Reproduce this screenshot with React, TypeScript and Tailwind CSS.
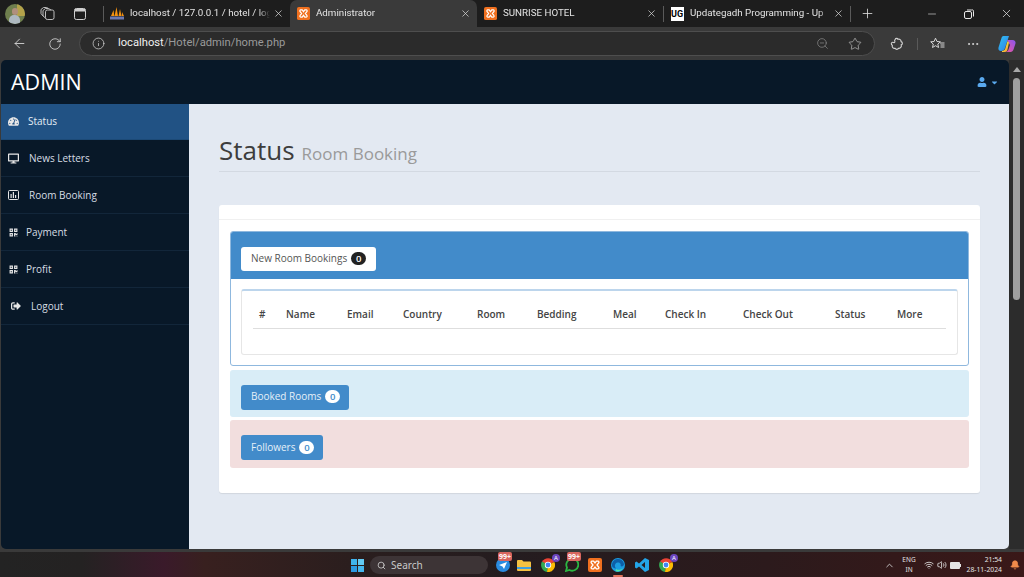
import React from "react";
import { ArrowLeft, RotateCw, Info, ZoomOut, Star, MoreHorizontal, X, Plus, Minus, Search, ChevronUp, Wifi, Volume2, Bell } from "lucide-react";
import { FaTachometerAlt, FaDesktop, FaQrcode, FaSignOutAlt, FaUser, FaCaretDown } from "react-icons/fa";

const Xampp = ({ s = 13 }: { s?: number }) => (
  <svg width={s} height={s} viewBox="0 0 14 14" className="shrink-0">
    <rect width="14" height="14" rx="2" fill="#f0701f" />
    <path d="M4 3.200h1.600L7 5l1.400-1.800H10c1 0 1.200 1.200.6 1.800L9 7l1.600 2c.6.7.4 1.800-.6 1.800H8.400L7 9l-1.400 1.800H4c-1 0-1.200-1.100-.6-1.800L5 7 3.400 5c-.6-.6-.4-1.800.6-1.800z" fill="none" stroke="#fff" strokeWidth="1.300" />
  </svg>
);

const Chrome = () => (
  <div className="relative w-[14px] h-[14px]">
    <svg width="14" height="14" viewBox="0 0 14 14">
      <path d="M7 7 1 4A7 7 0 0 1 13.300 4z" fill="#e94235" />
      <path d="M7 7 1 3.600A7 7 0 0 0 6 14z" fill="#34a853" />
      <path d="M7 7 13.300 4A7 7 0 0 1 6 14z" fill="#fbbc04" />
      <circle cx="7" cy="7" r="3.200" fill="#fff" />
      <circle cx="7" cy="7" r="2.400" fill="#4285f4" />
    </svg>
    <span className="absolute -top-[4px] -right-[5px] w-[8px] h-[8px] rounded-full bg-[#6b46c1] text-white text-[6px] leading-[8px] text-center">A</span>
  </div>
);

const Tab = ({ icon, title, active, w }: { icon: React.ReactNode; title: string; active?: boolean; w: string }) => (
  <div className={`flex items-center h-full px-[6px] ${w} ${active ? "bg-[#3a3a3a] rounded-t-[7px]" : ""}`}>
    <div className="w-[14px] h-[14px] flex items-center justify-center shrink-0">{icon}</div>
    <span className="ml-[6px] flex-1 min-w-0 overflow-hidden whitespace-nowrap text-[9.750px] text-[#e4e4e4] [mask-image:linear-gradient(to_right,black_92%,transparent)]">{title}</span>
    <X size={11} strokeWidth={1.600} className="text-[#d8d8d8] shrink-0 ml-[3px]" />
  </div>
);

const Sep = ({ h = "h-[16px]" }: { h?: string }) => <div className={`w-px ${h} bg-[#5a5a5a] shrink-0`} />;

const BoxChart = () => (
  <svg width="11" height="10" viewBox="0 0 11 10">
    <rect x=".5" y=".5" width="10" height="9" rx="1" fill="none" stroke="currentColor" />
    <path d="M2.500 4h1.200v4H2.500zM4.800 2h1.200v6H4.800zM7 5h1.200v3H7z" fill="currentColor" />
  </svg>
);

const navItems = [
  { label: "Status", icon: <FaTachometerAlt size={11} />, ml: "ml-[9px]", active: true, h: "h-[36px]" },
  { label: "News Letters", icon: <FaDesktop size={11} />, ml: "ml-[10px]" },
  { label: "Room Booking", icon: <BoxChart />, ml: "ml-[10px]" },
  { label: "Payment", icon: <FaQrcode size={9} />, ml: "ml-[7px]" },
  { label: "Profit", icon: <FaQrcode size={9} />, ml: "ml-[7px]" },
  { label: "Logout", icon: <FaSignOutAlt size={10} />, ml: "ml-[10px]", pad: "pl-[9px]" },
];

const cols = ["#", "Name", "Email", "Country", "Room", "Bedding", "Meal", "Check In", "Check Out", "Status", "More"];

const Badge = ({ dark }: { dark?: boolean }) => (
  <span className={`ml-[4px] w-[15px] h-[13px] rounded-full text-[9.500px] font-semibold leading-[13px] text-center ${dark ? "bg-[#222] text-white" : "bg-white text-[#428bca]"}`}>0</span>
);

export default function App() {
  return (
    <div className="w-[1024px] h-[577px] overflow-hidden flex flex-col bg-[#3a3a3a] font-['Open_Sans',sans-serif]">
      {/* tab strip */}
      <div className="h-[27px] flex items-center bg-[#1d1d1d] shrink-0 font-['Roboto',sans-serif]">
        <div className="w-[104px] flex items-center shrink-0">
          <div className="ml-[5px] w-[20px] h-[20px] rounded-full overflow-hidden relative bg-[#6f7f4e]">
            <div className="absolute right-0 top-0 w-[8px] h-[12px] bg-[#b3a24a]" />
            <div className="absolute left-[7px] top-[4px] w-[6px] h-[7px] rounded-full bg-[#b08f7c]" />
            <div className="absolute left-[4px] top-[11px] w-[11px] h-[9px] rounded-t-[5px] bg-[#aeb8c0]" />
          </div>
          <svg width="15" height="15" viewBox="0 0 15 15" fill="none" stroke="#bdbdbd" strokeWidth="1" className="ml-[15px]">
            <rect x="5.500" y="4" width="8.500" height="9.500" rx="1.800" />
            <path d="M5.500 12 3 10V4.500L5.500 2.500h3l2.500 1.500M3 10 1 7.500V3.500L3.500 1.500h3l2 1" />
          </svg>
          <svg width="12" height="12" viewBox="0 0 12 12" fill="none" stroke="#cfcfcf" strokeWidth="1" className="ml-[19px]">
            <rect x=".5" y=".5" width="11" height="11" rx="1.800" />
            <rect x="1" y="1" width="10" height="2.500" fill="#cfcfcf" stroke="none" />
          </svg>
          <div className="ml-auto"><Sep /></div>
        </div>
        <Tab
          w="w-[186px]"
          title="localhost / 127.0.0.1 / hotel / log"
          icon={
            <svg width="14" height="13" viewBox="0 0 14 13">
              <path d="M1 9 3.500 3 4.300 9zM4.500 9 6.500 0 8 9zM8.500 9 10 2 11.500 9zM11.800 9 12 5l2 4z" fill="#f29111" />
              <rect x="0" y="9.500" width="14" height="3" fill="#6c78af" />
            </svg>
          }
        />
        <Tab w="w-[187px]" active title="Administrator" icon={<Xampp />} />
        <Tab w="w-[186px]" title="SUNRISE HOTEL" icon={<Xampp />} />
        <Sep />
        <Tab
          w="w-[186px]"
          title="Updategadh Programming - Up"
          icon={<div className="w-[13px] h-[14px] bg-white text-black text-[9px] leading-[14px] font-bold text-center overflow-hidden">UG</div>}
        />
        <Sep />
        <Plus size={15} strokeWidth={1.300} className="text-[#e0e0e0] ml-[9px]" />
        <Minus size={12} strokeWidth={1.200} className="text-[#e8e8e8] ml-[51px]" />
        <svg width="10" height="10" viewBox="0 0 10 10" fill="none" stroke="#e8e8e8" strokeWidth="1" className="ml-[26px]">
          <rect x=".5" y="2.500" width="7" height="7" rx="1.500" />
          <path d="M3 1h4.500A1.500 1.500 0 0 1 9.500 3v4.500" />
        </svg>
        <X size={13} strokeWidth={1.300} className="text-[#f0f0f0] ml-[26px]" />
      </div>

      {/* toolbar */}
      <div className="h-[33px] flex items-center bg-[#3a3a3a] shrink-0 font-['Roboto',sans-serif]">
        <ArrowLeft size={15} strokeWidth={1.400} className="text-[#d8d8d8] ml-[12px]" />
        <RotateCw size={14} strokeWidth={1.400} className="text-[#d8d8d8] ml-[21px]" />
        <div className="ml-[17px] w-[796px] h-[25px] rounded-full bg-[#2b2b2b] border border-[#4e4e4e] flex items-center">
          <Info size={13} strokeWidth={1.300} className="text-[#dcdcdc] ml-[12px]" />
          <span className="ml-[13px] text-[11.200px] text-[#f0f0f0]">
            localhost<span className="text-[#9a9a9a]">/Hotel/admin/home.php</span>
          </span>
          <ZoomOut size={13} strokeWidth={1.300} className="text-[#8c8c8c] ml-auto" />
          <Star size={14} strokeWidth={1.200} className="text-[#bdbdbd] ml-[19px] mr-[12px]" />
        </div>
        <svg width="14" height="14" viewBox="0 0 14 14" fill="none" stroke="#d0d0d0" strokeWidth="1.100" className="ml-[15px]">
          <path d="M5.200 2.300C5.500 1 7.700 1 8 2.300c1.600-.5 3.200.6 3.100 2.300 1.700.4 1.700 2.900.1 3.300.7 1.900-.9 3.800-2.700 3.400-.6 1.400-2.800 1.400-3.400 0-1.900.4-3.300-1.200-2.800-3 -1.300-.7-1.300-2.300-.2-2.900.6-.3 1.100 0 1.700.2.800.2 1.400-.6 1-1.300-.4-.7-.1-1.500.4-2z" />
        </svg>
        <div className="ml-[13px]"><Sep h="h-[12px]" /></div>
        <svg width="15" height="14" viewBox="0 0 15 14" fill="none" stroke="#d8d8d8" strokeWidth="1" className="ml-[12px]">
          <path d="M5.500 1.200 7 4.500l3.400.3-2.600 2.300.8 3.400-3.100-1.800-3 1.800.8-3.400L.7 4.800 4.100 4.500z" />
          <path d="M10.500 8h4M10.500 10h4M10 6h4.500" />
        </svg>
        <MoreHorizontal size={14} strokeWidth={1.500} className="text-[#e0e0e0] ml-[21px]" />
        <svg width="18" height="18" viewBox="0 0 18 18" className="ml-[18px]">
          <defs>
            <linearGradient id="cp1" x1="0" y1="0" x2="1" y2="1"><stop offset="0" stopColor="#2fc4f2" /><stop offset="1" stopColor="#2f7ae8" /></linearGradient>
            <linearGradient id="cp2" x1="0" y1="1" x2="1" y2="0"><stop offset="0" stopColor="#f0569a" /><stop offset="1" stopColor="#8a55f0" /></linearGradient>
            <linearGradient id="cp3" x1="0" y1="0" x2="1" y2="1"><stop offset="0" stopColor="#46d08a" /><stop offset=".5" stopColor="#f5d33a" /><stop offset="1" stopColor="#f57a3a" /></linearGradient>
          </defs>
          <path d="M5.500 1H11L7 13c-.5 2-2 3-4 3-2 0-3-1.500-2.500-3.500L3.500 3c.3-1.300 1-2 2-2z" fill="url(#cp1)" />
          <path d="M9 5h5.500c2 0 3.500 1.500 3 3.500l-2 6c-.5 1.500-1.500 2.500-3 2.500H7c2 0 3-1 3.500-2.500L12 10z" fill="url(#cp2)" />
          <path d="M4 16c2 0 2.800-1 3.300-2.500L9.500 6 11 7.500 9.500 14.500c-.3 1.500-1 2.500-2.500 2.500H4z" fill="url(#cp3)" />
        </svg>
      </div>

      {/* page + scrollbar */}
      <div className="h-[489px] flex shrink-0">
        <div className="w-[1008px] ml-px flex flex-col rounded-t-[5px] rounded-b-[5px] overflow-hidden">
          <div className="h-[44px] flex items-center justify-between bg-[#081828] shrink-0">
            <span className="ml-[10px] text-[21.500px] font-medium text-white">ADMIN</span>
            <div className="flex items-center gap-[3px] mr-[10px] text-[#5aa9ee]">
              <FaUser size={10} />
              <FaCaretDown size={9} />
            </div>
          </div>
          <div className="flex flex-1 min-h-0">
            <nav className="w-[188px] bg-[#081828] shrink-0">
              {navItems.map((n) => (
                <div
                  key={n.label}
                  className={`${n.h ?? "h-[37px]"} flex items-center border-b ${n.pad ?? "pl-[7px]"} text-[10px] ${
                    n.active ? "bg-[#215284] border-[#1c4a77] text-[#e4edf5]" : "border-[#12263a] text-[#d6dde4]"
                  }`}
                >
                  <span className="w-[11px] flex justify-center shrink-0 text-[#e6e6e6]">{n.icon}</span>
                  <span className={n.ml}>{n.label}</span>
                </div>
              ))}
            </nav>
            <main className="flex-1 bg-[#e3e9f2] pl-[30px] pr-[29px] pt-[27px]">
              <div className="h-[41px] border-b border-[#d3d9e2] flex items-baseline">
                <span className="text-[26px] leading-[38px] text-[#3d3d3d]">Status</span>
                <span className="ml-[7px] text-[17px] text-[#9a9a9a]">Room Booking</span>
              </div>
              <div className="mt-[33px] h-[288px] bg-white rounded-[3px] shadow-[0_1px_1px_rgba(0,0,0,0.08)]">
                <div className="h-[15px] border-b border-[#f0f0f0]" />
                <div className="px-[11px] pt-[11px] flex flex-col">
                  <div className="h-[135px] border border-[#8fb8de] rounded-[3px] flex flex-col overflow-hidden">
                    <div className="h-[47px] bg-[#428bca] px-[10px] flex items-center shrink-0">
                      <div className="mt-[7px] h-[24px] w-[135px] bg-white rounded-[3px] flex items-center pl-[10px] pb-[2px] text-[10px] text-[#555]">
                        New Room Bookings
                        <Badge dark />
                      </div>
                    </div>
                    <div className="px-[10px] pt-[10px]">
                      <div className="h-[66px] border border-[#e6e6e6] border-t-2 border-t-[#bcd5ec] rounded-[3px] px-[11px] pt-[14px]">
                        <div className="grid grid-cols-[27px_61px_56px_74px_60px_76px_52px_78px_92px_62px_55px] h-[24px] border-b border-[#dedede] text-[10px] font-semibold text-[#444] leading-[19px]">
                          {cols.map((c) => (
                            <div key={c} className="pl-[6px] whitespace-nowrap">{c}</div>
                          ))}
                        </div>
                      </div>
                    </div>
                  </div>
                  <div className="mt-[4px] h-[47px] bg-[#d9edf7] rounded-[3px] pl-[11px] flex items-center">
                    <div className="mt-[7px] h-[25px] w-[108px] bg-[#428bca] rounded-[3px] flex items-center pl-[10px] pb-[2px] text-[10px] text-[#e6f0f8]">
                      Booked Rooms
                      <Badge />
                    </div>
                  </div>
                  <div className="mt-[3px] h-[48px] bg-[#f2dede] rounded-[3px] pl-[11px] flex items-center">
                    <div className="mt-[7px] h-[25px] w-[82px] bg-[#428bca] rounded-[3px] flex items-center pl-[10px] pb-px text-[10px] text-[#e6f0f8]">
                      Followers
                      <Badge />
                    </div>
                  </div>
                </div>
              </div>
            </main>
          </div>
        </div>
        <div className="flex-1 bg-[#2c2c2c] flex flex-col items-center pt-[7px]">
          <div className="w-0 h-0 border-l-[4px] border-r-[4px] border-b-[5px] border-transparent border-b-[#a8a8a8]" />
          <div className="mt-[6px] w-[7px] h-[222px] rounded-full bg-[#9f9f9f]" />
        </div>
      </div>

      {/* taskbar */}
      <div className="flex-1 flex items-center pt-px border-t-[3px] border-[#3a3a3a] bg-[linear-gradient(90deg,#232323_0%,#242222_8%,#3a1a2a_16%,#38201f_20%,#2a1e1e_35%,#241c1f_50%,#2c1a1c_75%,#3a1818_100%)] font-['Noto_Sans',sans-serif]">
        <div className="grid grid-cols-2 gap-px w-[13px] h-[13px] ml-[351px]">
          <div className="bg-[#3fb4ee]" /><div className="bg-[#62caf3]" /><div className="bg-[#2b9ae3]" /><div className="bg-[#45b7ee]" />
        </div>
        <div className="ml-[6px] w-[118px] h-[18px] rounded-full bg-[#3d3436] flex items-center">
          <Search size={9} strokeWidth={2} className="text-[#ddd] ml-[7px]" />
          <span className="ml-[5px] text-[10px] text-[#c8c8c8]">Search</span>
        </div>
        <div className="ml-[8px] w-[14px] h-[14px] rounded-full bg-[#2a8be0] relative">
          <svg width="14" height="14" viewBox="0 0 14 14"><path d="M3 7l8-3-3 7-1.500-2.500z" fill="#fff" /></svg>
          <span className="absolute -top-[6px] left-[2px] px-[1px] bg-[#d9665f] rounded-[2px] text-[7px] leading-[9px] text-white font-bold whitespace-nowrap">99+</span>
        </div>
        <svg width="14" height="13" viewBox="0 0 14 13" className="ml-[7px]">
          <path d="M0 2a1 1 0 0 1 1-1h4l1.500 1.500H13a1 1 0 0 1 1 1V11a1 1 0 0 1-1 1H1a1 1 0 0 1-1-1z" fill="#f5c242" />
          <rect y="8" width="14" height="2" fill="#3f9fe0" />
        </svg>
        <div className="ml-[10px]"><Chrome /></div>
        <div className="ml-[10px] w-[14px] h-[14px] relative">
          <svg width="14" height="14" viewBox="0 0 14 14" fill="none"><path d="M1 13l1-3.500A6 6 0 1 1 4.500 12z" stroke="#2bb741" strokeWidth="1.800" /></svg>
          <span className="absolute -top-[6px] left-[2px] px-[1px] bg-[#d9665f] rounded-[2px] text-[7px] leading-[9px] text-white font-bold whitespace-nowrap">99+</span>
        </div>
        <div className="ml-[9px]"><Xampp s={14} /></div>
        <div className="ml-[9px] w-[14px] h-[14px] relative">
          <svg width="14" height="14" viewBox="0 0 14 14">
            <circle cx="7" cy="7" r="7" fill="#1b9de2" />
            <path d="M1 8a6 6 0 0 1 12-2c0 2-2 3-3.500 2 1-2-1-4-3-3.500C4 5 3 8 5 10.500 3 10.500 1.500 9.500 1 8z" fill="#0d5fa8" />
            <path d="M5 11c2 1.500 5 1 7-1-1.500 3-5 4.500-7.500 3z" fill="#50e6a0" />
          </svg>
          <div className="absolute -bottom-[5px] left-[2px] w-[10px] h-[2px] rounded-full bg-[#e0745c]" />
        </div>
        <svg width="14" height="14" viewBox="0 0 14 14" className="ml-[10px]">
          <path d="M10 0l4 2v10l-4 2-6-5.500L1.500 10.500 0 9.500V4.500l1.500-1L4 5.500zM10 4 6.500 7 10 10z" fill="#23a5e8" fillRule="evenodd" />
        </svg>
        <div className="ml-[10px]"><Chrome /></div>
        <ChevronUp size={11} strokeWidth={1.800} className="text-[#ddd] ml-[211px]" />
        <div className="ml-[3px] w-[22px] text-center text-[6.500px] leading-[10px] text-[#e4e4e4]">ENG<br />IN</div>
        <Wifi size={10} className="text-[#e4e4e4] ml-[4px]" />
        <Volume2 size={10} className="text-[#e4e4e4] ml-[3px]" />
        <svg width="11" height="9" viewBox="0 0 11 9" className="ml-[3px]"><rect x="0" y="1" width="10" height="7" rx="1" fill="#e4e4e4" /><rect x="10" y="3" width="1" height="3" fill="#e4e4e4" /></svg>
        <div className="ml-[5px] w-[36px] text-right text-[6.800px] leading-[10px] text-[#e4e4e4] whitespace-nowrap">21:54<br />28-11-2024</div>
        <Bell size={10} fill="#f08a4b" className="text-[#f08a4b] ml-[8px]" />
      </div>
    </div>
  );
}
